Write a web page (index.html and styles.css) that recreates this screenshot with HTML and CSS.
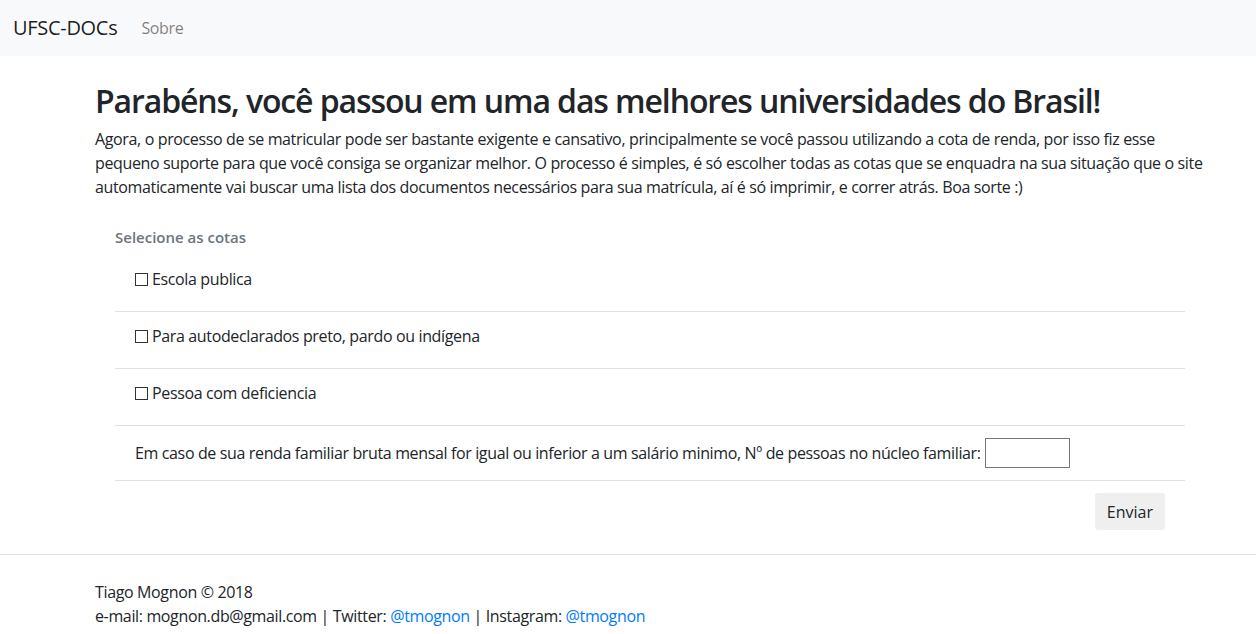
FILE: index.html
```html
<!DOCTYPE html>
<html lang="pt-BR">
<head>
<meta charset="utf-8">
<title>UFSC-DOCs</title>
<link rel="stylesheet" href="styles.css">
</head>
<body>
<nav class="navbar">
  <a class="brand" href="#">UFSC-DOCs</a>
  <a class="nav-link" href="#">Sobre</a>
</nav>
<main class="main">
  <h1 class="title">Parabéns, você passou em uma das melhores universidades do Brasil!</h1>
  <p class="lead">Agora, o processo de se matricular pode ser bastante exigente e cansativo, principalmente se você passou utilizando a cota de renda, por isso fiz esse pequeno suporte para que você consiga se organizar melhor. O processo é simples, é só escolher todas as cotas que se enquadra na sua situação que o site automaticamente vai buscar uma lista dos documentos necessários para sua matrícula, aí é só imprimir, e correr atrás. Boa sorte :)</p>
  <form class="form">
    <div class="legend">Selecione as cotas</div>
    <ul class="list">
      <li class="item"><label class="check"><input type="checkbox" class="box">Escola publica</label></li>
      <li class="item"><label class="check"><input type="checkbox" class="box">Para autodeclarados preto, pardo ou indígena</label></li>
      <li class="item"><label class="check"><input type="checkbox" class="box">Pessoa com deficiencia</label></li>
      <li class="item item-input"><label class="check">Em caso de sua renda familiar bruta mensal for igual ou inferior a um salário minimo, Nº de pessoas no núcleo familiar: <input type="text" class="num"></label></li>
    </ul>
    <div class="actions"><button type="button" class="btn">Enviar</button></div>
  </form>
</main>
<footer class="footer">
  <div class="footer-inner">
    <div>Tiago Mognon © 2018</div>
    <div>e-mail: mognon.db@gmail.com | Twitter: <a href="#">@tmognon</a> | Instagram: <a href="#">@tmognon</a></div>
  </div>
</footer>
</body>
</html>
```
FILE: styles.css
```css
* { box-sizing: border-box; }
html, body { margin: 0; padding: 0; }
body {
  font-family: "Open Sans", "Noto Sans", "Liberation Sans", sans-serif;
  font-size: 16px;
  line-height: 24px;
  letter-spacing: -0.36px;
  color: #212529;
  background: #fff;
}
a { color: #007bff; text-decoration: none; }
.navbar {
  height: 56px;
  background: #f8f9fa;
  display: flex;
  align-items: center;
  padding: 0 13px;
}
.brand {
  font-size: 20px;
  letter-spacing: -0.3px;
  color: rgba(0,0,0,.9);
  margin-right: 24px;
}
.nav-link {
  color: rgba(0,0,0,.5);
  font-size: 16px;
}
.main {
  width: 1110px;
  margin-left: 95px;
  padding-top: 26px;
}
.title {
  font-size: 32px;
  font-weight: 600;
  line-height: 38px;
  letter-spacing: -1.1px;
  margin: 0 0 7px;
}
.lead { margin: 0 0 26px; }
.form { padding: 0 20px; }
.legend {
  color: #6c757d;
  font-weight: 600;
  font-size: 15px;
  letter-spacing: 0;
  margin-bottom: 6px;
}
.list { list-style: none; margin: 0; padding: 0; }
.item {
  height: 57px;
  padding: 12px 20px 0;
  border-bottom: 1px solid #dee2e6;
}
.item-input { height: 55px; padding: 12px 20px; }
.check { display: inline-flex; align-items: center; }
.box {
  appearance: none;
  -webkit-appearance: none;
  width: 13px;
  height: 13px;
  margin: 0 4px 0 0;
  border: 1px solid #333;
  background: #fff;
}
.num {
  width: 85px;
  height: 30px;
  margin-left: 4px;
  border: 1px solid #767676;
  font: inherit;
}
.actions {
  display: flex;
  justify-content: flex-end;
  padding: 12px 20px 0;
}
.btn {
  font: inherit;
  color: #212529;
  background: #efefef;
  border: 0;
  border-radius: 3px;
  height: 37px;
  padding: 0 12px;
}
.footer {
  margin-top: 24px;
  border-top: 1px solid #dee2e6;
  padding: 25px 0 20px;
}
.footer-inner { margin-left: 95px; }
```
